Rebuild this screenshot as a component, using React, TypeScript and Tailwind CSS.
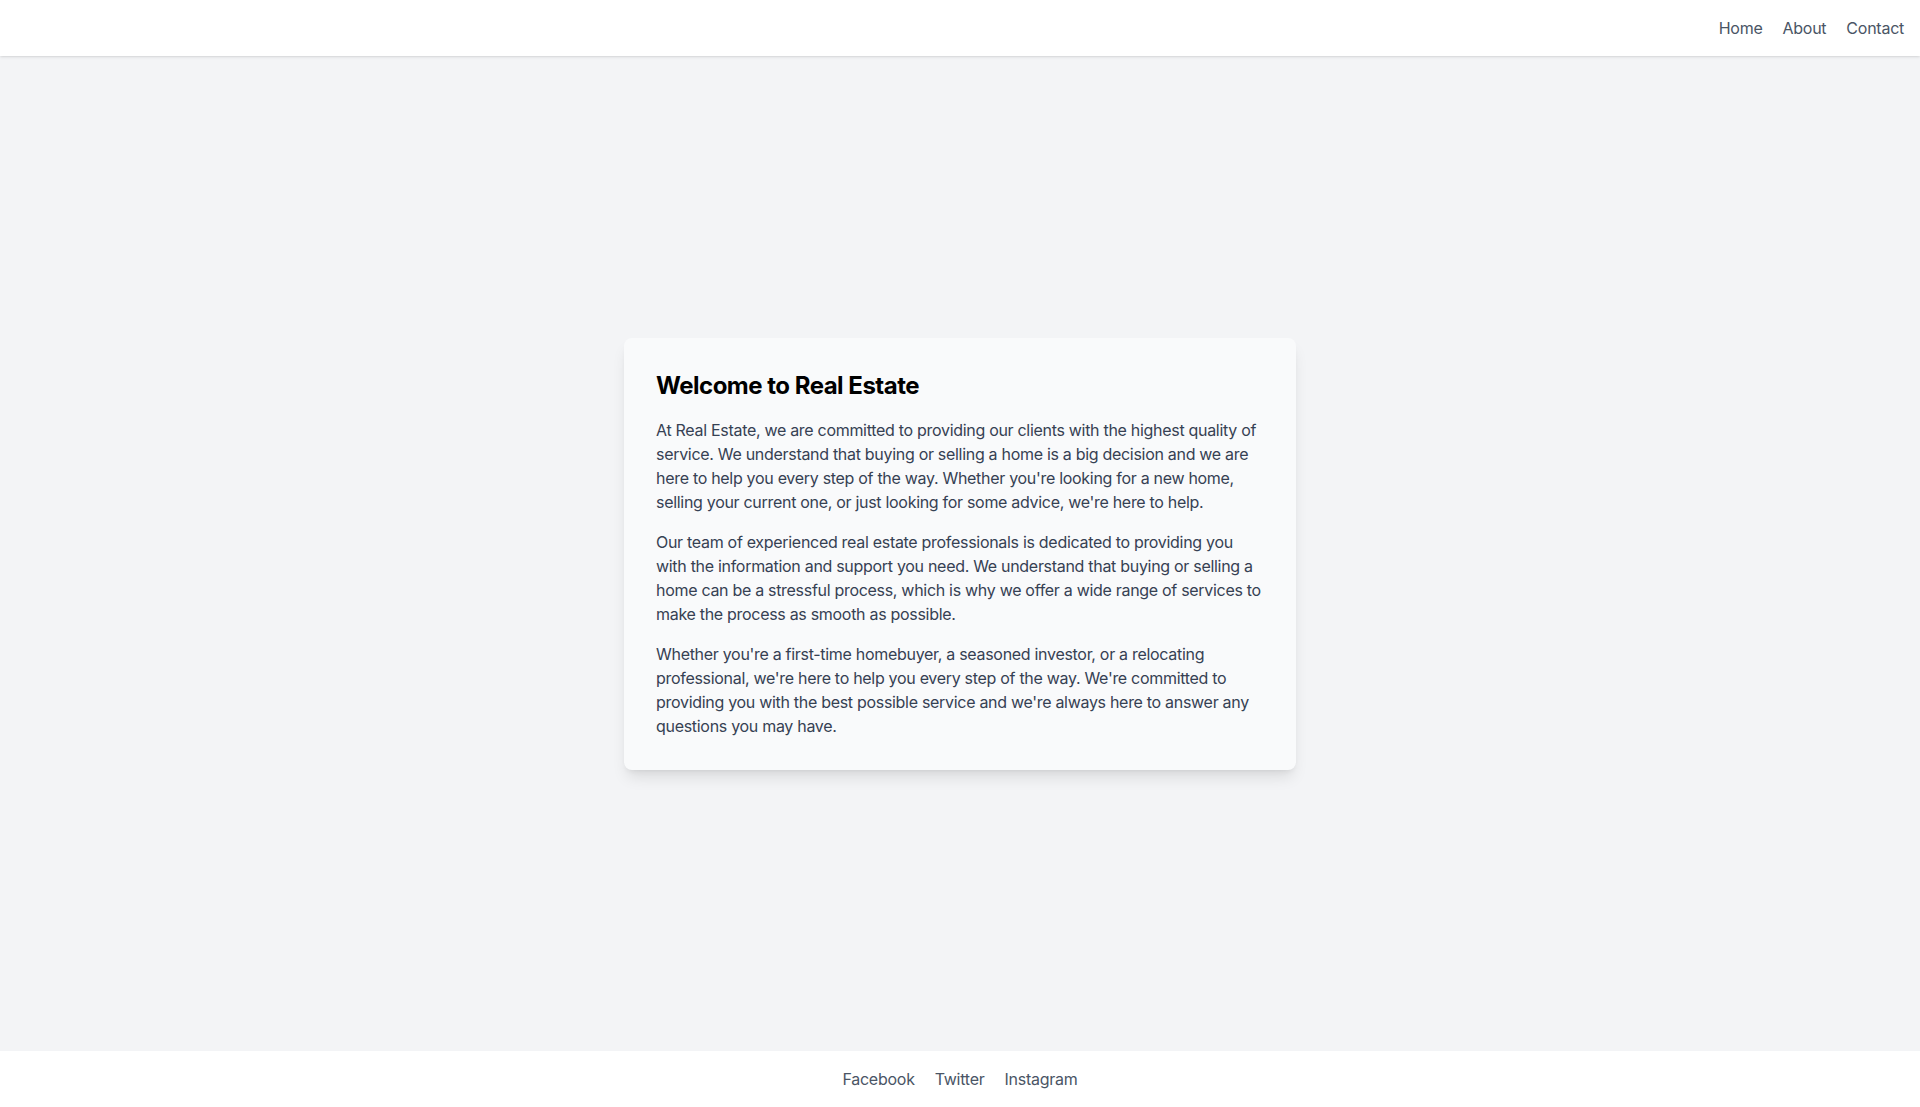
const navLinks = ["Home", "About", "Contact"];
const socialLinks = ["Facebook", "Twitter", "Instagram"];

const paragraphs = [
  "At Real Estate, we are committed to providing our clients with the highest quality of service. We understand that buying or selling a home is a big decision and we are here to help you every step of the way. Whether you're looking for a new home, selling your current one, or just looking for some advice, we're here to help.",
  "Our team of experienced real estate professionals is dedicated to providing you with the information and support you need. We understand that buying or selling a home can be a stressful process, which is why we offer a wide range of services to make the process as smooth as possible.",
  "Whether you're a first-time homebuyer, a seasoned investor, or a relocating professional, we're here to help you every step of the way. We're committed to providing you with the best possible service and we're always here to answer any questions you may have.",
];

export default function App() {
  return (
    <div className="min-h-screen flex flex-col bg-gray-100 font-['Inter',sans-serif] tracking-[-0.25px]">
      <header className="bg-white shadow p-4 flex justify-end">
        <nav className="flex gap-5">
          {navLinks.map((link) => (
            <a key={link} href="#" className="text-gray-600 hover:text-gray-900">
              {link}
            </a>
          ))}
        </nav>
      </header>

      <main className="flex-1 flex items-center justify-center">
        <div className="w-full max-w-2xl bg-gray-50 rounded-lg shadow-lg p-8">
          <h1 className="text-2xl font-bold text-black mb-4 tracking-[-0.5px]">Welcome to Real Estate</h1>
          {paragraphs.map((text, i) => (
            <p
              key={i}
              className={
                i < paragraphs.length - 1
                  ? "text-gray-700 mb-4 tracking-[-0.3px]"
                  : "text-gray-700 tracking-[-0.3px]"
              }
            >
              {text}
            </p>
          ))}
        </div>
      </main>

      <footer className="bg-white p-4 flex justify-center">
        <div className="flex gap-5">
          {socialLinks.map((link) => (
            <a key={link} href="#" className="text-gray-600 hover:text-gray-900">
              {link}
            </a>
          ))}
        </div>
      </footer>
    </div>
  );
}
